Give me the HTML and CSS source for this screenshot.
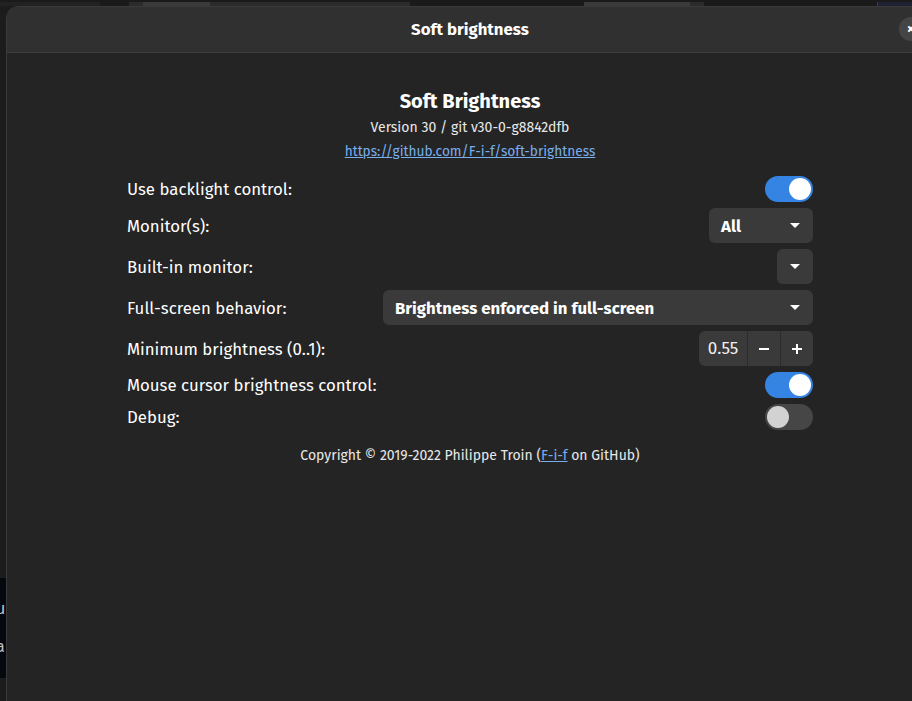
FILE: index.html
```html
<!DOCTYPE html>
<html>
<head>
<meta charset="utf-8">
<link rel="stylesheet" href="styles.css">
</head>
<body>
<div class="desktop">
  <div class="topstrip">
    <div class="seg seg-dark" style="width:29px"></div>
    <div class="seg seg-mid" style="width:14px"></div>
    <div class="seg seg-light" style="width:67px"></div>
    <div class="seg seg-mid" style="width:200px"></div>
    <div class="seg seg-dark" style="width:174px"></div>
    <div class="seg seg-light" style="width:106px"></div>
    <div class="seg seg-mid" style="width:14px"></div>
    <div class="seg seg-dark" style="width:173px"></div>
    <div class="seg seg-navy" style="flex:1"></div>
  </div>
  <div class="bgwin">
    <span>u</span>
    <span>a</span>
  </div>

  <div class="window">
    <header class="headerbar">
      <div class="title">Soft brightness</div>
      <div class="close">×</div>
    </header>
    <main class="content">
      <div class="about">
        <div class="app-name">Soft Brightness</div>
        <div class="version">Version 30 / git v30-0-g8842dfb</div>
        <a class="link" href="#">https://github.com/F-i-f/soft-brightness</a>
      </div>

      <div class="rows">
        <div class="row">
          <span class="label">Use backlight control:</span>
          <div class="switch on"><div class="knob"></div></div>
        </div>
        <div class="row">
          <span class="label">Monitor(s):</span>
          <div class="dropdown w-all"><span class="dd-text">All</span><span class="arrow"></span></div>
        </div>
        <div class="row">
          <span class="label">Built-in monitor:</span>
          <div class="dropdown w-empty"><span class="arrow"></span></div>
        </div>
        <div class="row">
          <span class="label">Full-screen behavior:</span>
          <div class="dropdown w-wide"><span class="dd-text">Brightness enforced in full-screen</span><span class="arrow"></span></div>
        </div>
        <div class="row">
          <span class="label">Minimum brightness (0..1):</span>
          <div class="spin">
            <span class="spin-value">0.55</span>
            <span class="spin-btn">
              <svg width="10" height="10" viewBox="0 0 10 10"><rect x="0" y="4" width="10" height="2" fill="#fff"/></svg>
            </span>
            <span class="spin-btn">
              <svg width="10" height="10" viewBox="0 0 10 10"><rect x="0" y="4" width="10" height="2" fill="#fff"/><rect x="4" y="0" width="2" height="10" fill="#fff"/></svg>
            </span>
          </div>
        </div>
        <div class="row">
          <span class="label">Mouse cursor brightness control:</span>
          <div class="switch on"><div class="knob"></div></div>
        </div>
        <div class="row">
          <span class="label">Debug:</span>
          <div class="switch off"><div class="knob"></div></div>
        </div>
      </div>

      <div class="copyright">Copyright © 2019-2022 Philippe Troin (<a class="link" href="#">F-i-f</a> on GitHub)</div>
    </main>
  </div>
</div>
</body>
</html>
```

FILE: styles.css
```css
* { box-sizing: border-box; }
html, body {
  margin: 0;
  padding: 0;
  width: 912px;
  height: 701px;
  overflow: hidden;
  background: #1c1c1c;
  font-family: "Fira Sans", "Noto Sans", sans-serif;
  color: #ffffff;
}
.desktop {
  position: relative;
  width: 912px;
  height: 701px;
  overflow: hidden;
}
.topstrip {
  display: flex;
  height: 6px;
  padding-left: 100px;
  border-top: 2px solid #1a1a1a;
  background: #222222;
}
.seg { height: 4px; }
.seg-dark { background: #1a1a1a; }
.seg-mid { background: #2b2b2b; }
.seg-light { background: #3a3a3a; }
.seg-navy { background: #1f2133; border-left: 1px solid #3a3a3a; }

.bgwin {
  position: absolute;
  left: 0;
  top: 578px;
  width: 6px;
  height: 100px;
  background: #060810;
  color: #bfc3cc;
  font-size: 16px;
  display: flex;
  flex-direction: column;
  justify-content: center;
  gap: 22px;
  text-indent: -4px;
  overflow: hidden;
  line-height: 16px;
}

.window {
  position: absolute;
  left: 6px;
  top: 6px;
  width: 928px;
  height: 720px;
  background: #242424;
  border: 1px solid #3a3a3a;
  border-radius: 12px 12px 0 0;
  overflow: hidden;
}
.headerbar {
  position: relative;
  height: 46px;
  background: #303030;
  border-bottom: 1px solid #3e3e3e;
  display: flex;
  align-items: center;
  justify-content: center;
  padding-bottom: 1px;
}
.title {
  font-weight: 700;
  font-size: 16.8px;
  color: #ffffff;
}
.close {
  position: absolute;
  right: 10px;
  top: 10px;
  width: 24px;
  height: 24px;
  border-radius: 50%;
  background: #454545;
  color: #fff;
  font-size: 16px;
  font-weight: 700;
  line-height: 24px;
  text-align: center;
}

.content {
  padding: 36px 120px 0 120px;
  display: flex;
  flex-direction: column;
  align-items: stretch;
}
.about {
  display: flex;
  flex-direction: column;
  align-items: center;
}
.app-name {
  font-weight: 700;
  font-size: 20px;
  line-height: 24px;
}
.version {
  font-size: 14px;
  line-height: 20px;
  margin-top: 5px;
  color: #e8e8e8;
}
.link {
  color: #78aeed;
  text-decoration: underline;
  font-size: 14px;
}
.about .link { font-size: 13.7px; line-height: 20px; margin-top: 4px; }

.rows {
  margin-top: 14px;
  display: flex;
  flex-direction: column;
  gap: 6px;
}
.row {
  display: flex;
  align-items: center;
  justify-content: space-between;
}
.label {
  font-size: 16.8px;
  color: #ffffff;
}

.switch {
  width: 48px;
  height: 26px;
  border-radius: 13px;
  padding: 2px;
  display: flex;
}
.switch.on { background: #3584e4; justify-content: flex-end; }
.switch.off { background: #464646; justify-content: flex-start; }
.knob {
  width: 22px;
  height: 22px;
  border-radius: 50%;
  background: #ffffff;
}
.switch.off .knob { background: #d2d2d2; }

.dropdown {
  height: 35px;
  border-radius: 6px;
  background: #3a3a3a;
  display: flex;
  align-items: center;
  justify-content: space-between;
  padding: 0 12px;
}
.w-all { width: 104px; }
.w-empty { width: 36px; justify-content: center; padding: 0; }
.w-wide { width: 430px; }
.dd-text {
  font-weight: 700;
  font-size: 16.8px;
}
.arrow {
  width: 0;
  height: 0;
  border-left: 5px solid transparent;
  border-right: 5px solid transparent;
  border-top: 5px solid #ffffff;
  margin-right: 1px;
}

.spin {
  display: flex;
  height: 35px;
  border-radius: 6px;
  background: #3a3a3a;
  overflow: hidden;
}
.spin-value {
  width: 48px;
  display: flex;
  align-items: center;
  justify-content: center;
  font-size: 17px;
  font-weight: 400;
  color: #f0f0f0;
}
.spin-btn {
  width: 33px;
  display: flex;
  align-items: center;
  justify-content: center;
  border-left: 1px solid #2c2c2c;
  background: #3a3a3a;
}

.copyright {
  margin-top: 17px;
  text-align: center;
  font-size: 14px;
  color: #e8e8e8;
}
```
